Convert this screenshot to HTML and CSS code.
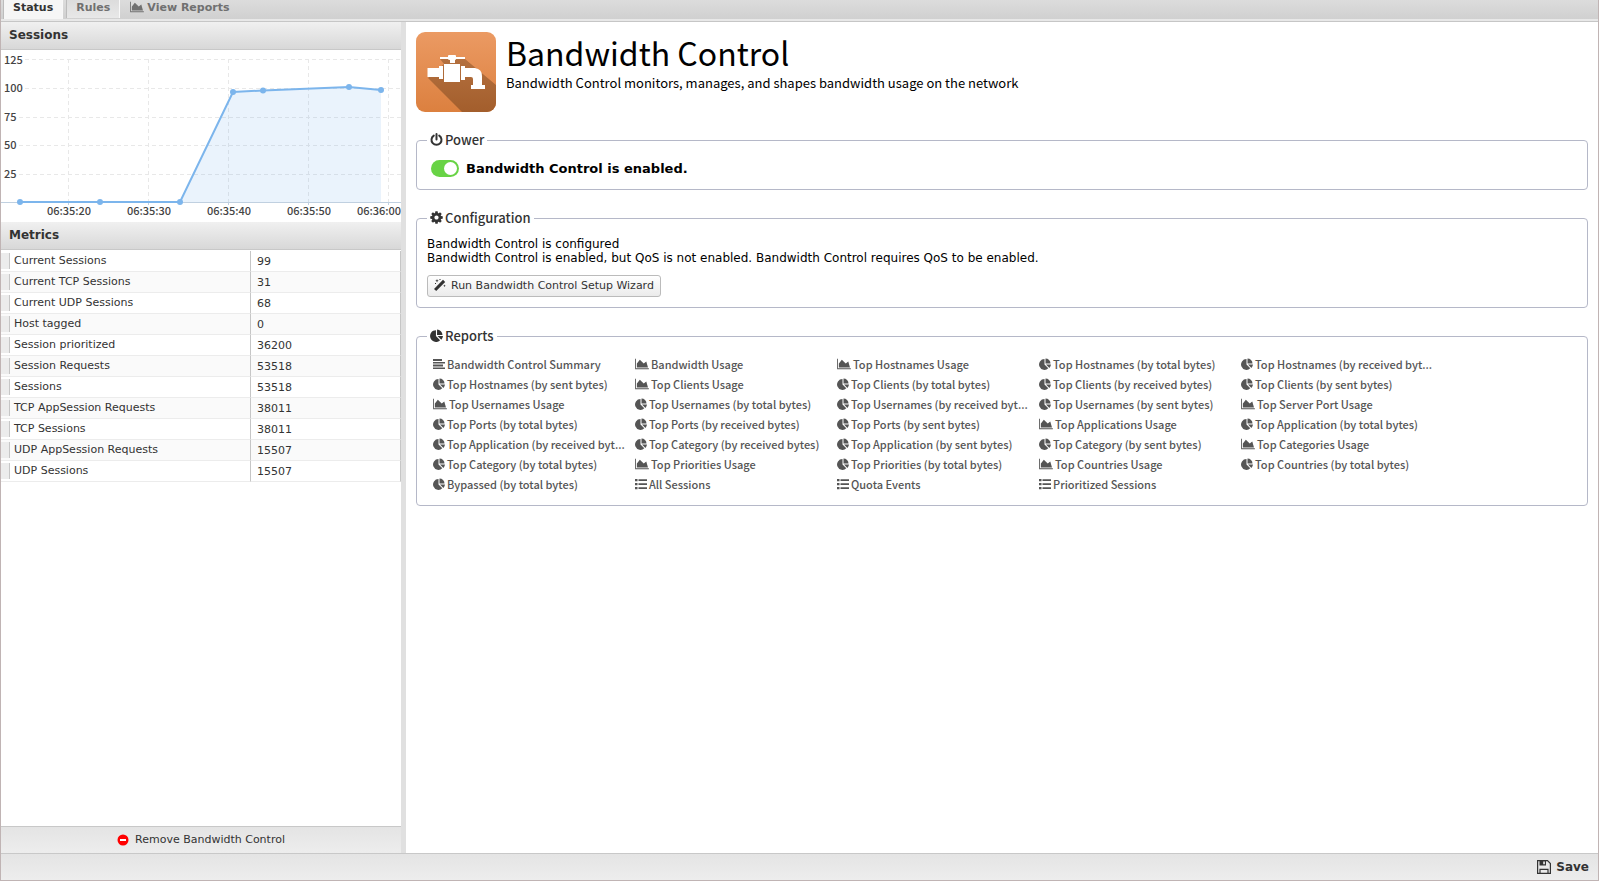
FILE: index.html
```html
<!DOCTYPE html>
<html lang="en">
<head>
  <meta charset="UTF-8">
  <meta name="viewport" content="width=device-width, initial-scale=1.0">
  <title>Bandwidth Control</title>
  <link rel="stylesheet" href="styles.css">
</head>
<body>
  <!-- icon set -->
  <svg class="sprite" aria-hidden="true">
    <symbol id="i-area" viewBox="0 0 2048 1792"><path d="M2048 1536v128H0V128h128v1408h1920zM1664 512l256 896H256V832l448-576 576 576z"/></symbol>
    <symbol id="i-pie" viewBox="0 0 12 12"><path d="M5.500 6.500 9.300 10.300A5.400 5.400 0 1 1 5.500 1.100zM7 6.500h5A5.500 5.500 0 0 1 10.400 9.900zM11.500 5.500h-5V.500A5 5 0 0 1 11.500 5.500z"/></symbol>
    <symbol id="i-align" viewBox="0 0 12 12"><path d="M0 1h9v2H0zM0 4h12v1.500H0zM0 6.500h10v2H0zM0 9.500h12v1.500H0z"/></symbol>
    <symbol id="i-list" viewBox="0 0 12 12"><path d="M0 1h2.500v2.300H0zM0 5h2.500v2.300H0zM0 9h2.500v2.300H0zM3.500 1.200H12v1.900H3.500zM3.500 5.200H12v1.900H3.500zM3.500 9.200H12v1.900H3.500z"/></symbol>
    <symbol id="i-power" viewBox="0 0 13 13"><path d="M3.800 2.600A5 5 0 1 0 9.200 2.600M6.500 1v5.500" fill="none" stroke="currentColor" stroke-width="2" stroke-linecap="round"/></symbol>
    <symbol id="i-gear" viewBox="100 100 1592 1592"><path d="M1152 896q0-106-75-181t-181-75-181 75-75 181 75 181 181 75 181-75 75-181zm512-109v222q0 12-8 23t-20 13l-185 28q-19 54-39 91 35 50 107 138 10 12 10 25t-9 23q-27 37-99 108t-94 71q-12 0-26-9l-138-108q-44 23-91 38-16 136-29 186-7 28-36 28H785q-14 0-24.500-8.500T749 1634l-28-184q-49-16-90-37l-141 107q-10 9-25 9-14 0-25-11-126-114-165-168-7-10-7-23 0-12 8-23 15-21 51-66.500t54-70.500q-27-50-41-99l-183-27q-13-2-21-12.500t-8-23.500V783q0-12 8-23t19-13l186-28q14-46 39-92-40-57-107-138-10-12-10-24 0-10 9-23 26-36 98.500-107.500T465 263q13 0 26 10l138 107q44-23 91-38 16-136 29-186 7-28 36-28h222q14 0 24.500 8.500T1043 158l28 184q49 16 90 37l142-107q9-9 24-9 13 0 25 10 129 119 165 170 7 8 7 22 0 12-8 23-15 21-51 66.500t-54 70.500q26 50 41 98l183 28q13 2 21 12.500t8 23.500z"/></symbol>
    <symbol id="i-wand" viewBox="0 0 12 12"><path d="M0 10 9 .800 11.200 3 2.200 12z"/><path d="M3 0l.5 1.200 1.200.5-1.200.5L3 3.400l-.5-1.200-1.200-.5 1.200-.5zM10.500 5.500l.4.900.9.400-.9.400-.4.900-.4-.9-.9-.4.900-.4zM5.500 0h1v1h-1zM1 4h1v1H1z"/></symbol>
    <symbol id="i-save" viewBox="0 0 14 14"><path d="M.6.600h9.900l2.900 2.900v9.900H.6z" fill="none" stroke="currentColor" stroke-width="1.200"/><path d="M2.500 1h6.500v4.500H2.500z"/><path d="M6.300 1.600h1.500v2.600H6.300z" fill="#fff"/><path d="M3 13V9.300h8V13" fill="none" stroke="currentColor" stroke-width="1.200"/></symbol>
  </svg>

  <div class="app">
    <nav class="tabs">
      <button class="tab active" type="button">Status</button>
      <button class="tab" type="button">Rules</button>
      <a class="reports-link" href="#"><svg class="icon wide"><use href="#i-area"/></svg>View Reports</a>
    </nav>

    <div class="main">
      <aside class="side">
        <h2 class="panel-head">Sessions</h2>
        <svg class="chart" viewBox="0 0 400 172" role="img" aria-label="Sessions">
          <g class="grid">
            <path d="M24 9.500H400M24 38.500H400M18 67.500H400M18 95.500H400M18 124.500H400"/>
            <path d="M67.500 9V152M147.500 9V152M227.500 9V152M307.500 9V152M387.500 9V152"/>
          </g>
          <path class="axis" d="M0 152.500H400M67.500 152v3M147.500 152v3M227.500 152v3M307.500 152v3M387.500 152v3"/>
          <path class="area" d="M179 152L232 42 262 40.500 348 37 380 40V152z"/>
          <path class="line" d="M19 152H179L232 42 262 40.500 348 37 380 40"/>
          <g class="dots">
            <circle cx="19" cy="152" r="3"/><circle cx="99" cy="152" r="3"/><circle cx="179" cy="152" r="3"/>
            <circle cx="232" cy="42" r="3"/><circle cx="262" cy="40.500" r="3"/><circle cx="348" cy="37" r="3"/><circle cx="380" cy="40" r="3"/>
          </g>
          <g class="labels">
            <text x="3" y="14">125</text><text x="3" y="42">100</text><text x="3" y="71">75</text><text x="3" y="99">50</text><text x="3" y="128">25</text>
          </g>
          <g class="labels times">
            <text x="68" y="165">06:35:20</text><text x="148" y="165">06:35:30</text><text x="228" y="165">06:35:40</text><text x="308" y="165">06:35:50</text><text x="378" y="165">06:36:00</text>
          </g>
        </svg>
        <h2 class="panel-head metrics-head">Metrics</h2>
        <table class="metrics">
          <tbody>
            <tr><td>Current Sessions</td><td>99</td></tr>
            <tr><td>Current TCP Sessions</td><td>31</td></tr>
            <tr><td>Current UDP Sessions</td><td>68</td></tr>
            <tr><td>Host tagged</td><td>0</td></tr>
            <tr><td>Session prioritized</td><td>36200</td></tr>
            <tr><td>Session Requests</td><td>53518</td></tr>
            <tr><td>Sessions</td><td>53518</td></tr>
            <tr><td>TCP AppSession Requests</td><td>38011</td></tr>
            <tr><td>TCP Sessions</td><td>38011</td></tr>
            <tr><td>UDP AppSession Requests</td><td>15507</td></tr>
            <tr><td>UDP Sessions</td><td>15507</td></tr>
          </tbody>
        </table>
        <button class="remove" type="button">
          <svg class="remove-icon" viewBox="0 0 12 12"><circle cx="6" cy="6" r="5.500" fill="#f00"/><path d="M3 5h6v2H3z" fill="#fff"/></svg>
          Remove Bandwidth Control
        </button>
      </aside>

      <main class="content">
        <header class="app-head">
          <svg class="app-icon" viewBox="0 0 80 80">
            <defs>
              <linearGradient id="orange" x1="0" y1="0" x2="0" y2="1"><stop offset="0" stop-color="#eb9a63"/><stop offset="1" stop-color="#dc803f"/></linearGradient>
              <linearGradient id="shade" x1="0" y1="0" x2="0" y2="1"><stop offset="0" stop-color="#b4703f"/><stop offset="1" stop-color="#a35e2c"/></linearGradient>
              <clipPath id="round"><rect width="80" height="80" rx="9"/></clipPath>
            </defs>
            <g clip-path="url(#round)">
              <rect width="80" height="80" fill="url(#orange)"/>
              <path d="M24 27H49L80 53V80H46L12 46 28 32z" fill="url(#shade)"/>
              <g fill="#fff">
                <path d="M24 25h8v-1q0-1 1-1h6q1 0 1 1v1h9v2h-9q0 1-1 1v3h-5v-3q-2 0-2-1h-8z"/>
                <rect x="28" y="32" width="16" height="18"/>
                <path d="M11.500 36H23v-2h4v13h-4v-2H11.500zM45 34h4v2h10q7 1 7 8v9h3v4H55v-4h2v-6q0-2-2-2h-6v3h-4z"/>
              </g>
            </g>
          </svg>
          <div>
            <h1>Bandwidth Control</h1>
            <p>Bandwidth Control monitors, manages, and shapes bandwidth usage on the network</p>
          </div>
        </header>

        <fieldset class="box power-box">
          <legend><svg class="icon"><use href="#i-power"/></svg>Power</legend>
          <label class="power"><input class="switch" type="checkbox" checked>Bandwidth Control is enabled.</label>
        </fieldset>

        <fieldset class="box config">
          <legend><svg class="icon"><use href="#i-gear"/></svg>Configuration</legend>
          <p>Bandwidth Control is configured<br>Bandwidth Control is enabled, but QoS is not enabled. Bandwidth Control requires QoS to be enabled.</p>
          <button class="wizard" type="button"><svg class="icon"><use href="#i-wand"/></svg>Run Bandwidth Control Setup Wizard</button>
        </fieldset>

        <fieldset class="box reports">
          <legend><svg class="icon"><use href="#i-pie"/></svg>Reports</legend>
          <div class="report-list" id="reports"></div>
        </fieldset>
      </main>
    </div>

    <footer class="bottom">
      <button class="save" type="button"><svg class="save-icon"><use href="#i-save"/></svg>Save</button>
    </footer>
  </div>
  <script src="script.js"></script>
</body>
</html>
```
FILE: script.js
```js
const reports = [
  ["align", "Bandwidth Control Summary"],
  ["area", "Bandwidth Usage"],
  ["area", "Top Hostnames Usage"],
  ["pie", "Top Hostnames (by total bytes)"],
  ["pie", "Top Hostnames (by received byt..."],
  ["pie", "Top Hostnames (by sent bytes)"],
  ["area", "Top Clients Usage"],
  ["pie", "Top Clients (by total bytes)"],
  ["pie", "Top Clients (by received bytes)"],
  ["pie", "Top Clients (by sent bytes)"],
  ["area", "Top Usernames Usage"],
  ["pie", "Top Usernames (by total bytes)"],
  ["pie", "Top Usernames (by received byt..."],
  ["pie", "Top Usernames (by sent bytes)"],
  ["area", "Top Server Port Usage"],
  ["pie", "Top Ports (by total bytes)"],
  ["pie", "Top Ports (by received bytes)"],
  ["pie", "Top Ports (by sent bytes)"],
  ["area", "Top Applications Usage"],
  ["pie", "Top Application (by total bytes)"],
  ["pie", "Top Application (by received byt..."],
  ["pie", "Top Category (by received bytes)"],
  ["pie", "Top Application (by sent bytes)"],
  ["pie", "Top Category (by sent bytes)"],
  ["area", "Top Categories Usage"],
  ["pie", "Top Category (by total bytes)"],
  ["area", "Top Priorities Usage"],
  ["pie", "Top Priorities (by total bytes)"],
  ["area", "Top Countries Usage"],
  ["pie", "Top Countries (by total bytes)"],
  ["pie", "Bypassed (by total bytes)"],
  ["list", "All Sessions"],
  ["list", "Quota Events"],
  ["list", "Prioritized Sessions"]
];

document.querySelector("#reports").innerHTML = reports.map(function (r) {
  let wide = r[0] == "area" ? " wide" : "";
  return `<a href="#"><svg class="icon${wide}"><use href="#i-${r[0]}"/></svg>${r[1]}</a>`;
}).join("");
```
FILE: styles.css
```css
* {
  box-sizing: border-box;
}

body {
  margin: 0;
  font-family: "DejaVu Sans", sans-serif;
  font-size: 11px;
  color: #333;
  background: #fff;
}

h1, h2, p {
  margin: 0;
}

button {
  font: inherit;
  color: inherit;
  cursor: pointer;
}

a {
  color: inherit;
  text-decoration: none;
}

.sprite {
  position: absolute;
  width: 0;
  height: 0;
}

.icon {
  width: 12px;
  height: 12px;
  fill: currentColor;
  flex: none;
}

.icon.wide {
  width: 14px;
}

.app {
  display: flex;
  flex-direction: column;
  height: 100vh;
  border: 1px solid #c0b4b4;
  border-top: 0;
}

/* tabs */
.tabs {
  display: flex;
  align-items: flex-start;
  height: 21px;
  padding-left: 2px;
  background: linear-gradient(#dcdcdc, #d0d0d0);
  border-bottom: 2px solid #e8e8e8;
  font-weight: bold;
  color: #707070;
}

.tab {
  height: 18px;
  margin-right: 3px;
  padding: 0 9px 4px;
  border: 1px solid #bcbcbc;
  border-right-color: #f8f8f8;
  border-width: 0 1px;
  background: linear-gradient(#dcdcdc, #e8e8e8);
  font-weight: bold;
}

.tab.active {
  height: 19px;
  padding-bottom: 5px;
  background: #f6f6f6;
  color: #333;
}

.reports-link {
  display: flex;
  align-items: center;
  gap: 3px;
  height: 14px;
  padding-left: 7px;
}

.main {
  display: flex;
  flex: 1;
  min-height: 0;
  border-top: 1px solid #c6c6c6;
}

/* left side */
.side {
  display: flex;
  flex-direction: column;
  flex: 0 0 405px;
  border-right: 5px solid #e0e0e0;
}

.panel-head {
  height: 28px;
  padding: 0 8px;
  border-bottom: 1px solid #c8c8c8;
  background: linear-gradient(#f0f0f0, #d8d8d8);
  font-size: 12px;
  line-height: 27px;
}

.chart {
  display: block;
  width: 100%;
}

.grid {
  fill: none;
  stroke: #e8e8e8;
  stroke-dasharray: 4 3;
}

.axis {
  fill: none;
  stroke: #c0d0e0;
}

.area {
  fill: #7cb5ec;
  fill-opacity: 0.16;
}

.line {
  fill: none;
  stroke: #7cb5ec;
  stroke-width: 2;
}

.dots {
  fill: #7cb5ec;
}

.labels {
  font-family: "Noto Sans CJK SC", sans-serif;
  font-size: 11px;
  font-weight: 500;
  fill: #444;
}

.times {
  text-anchor: middle;
}

.metrics {
  width: 100%;
  border-collapse: separate;
  border-spacing: 0;
  margin-top: 1px;
}

.metrics td {
  height: 21px;
  padding: 0 6px;
  border-right: 1px solid #c6c6c6;
  border-bottom: 1px solid #ececec;
}

.metrics td:first-child {
  width: 250px;
  padding-left: 0;
}

.metrics td:first-child::before {
  content: "";
  display: inline-block;
  width: 8px;
  height: 16px;
  margin-right: 4px;
  border-right: 1px solid #c6c6c6;
  background: #ececec;
  vertical-align: middle;
}

.metrics tr:nth-child(even) {
  background: #fafafa;
}

.remove {
  display: flex;
  align-items: center;
  justify-content: center;
  gap: 6px;
  height: 27px;
  margin-top: auto;
  padding-bottom: 2px;
  border: 0;
  border-top: 1px solid #c8c8c8;
  background: linear-gradient(#e4e4e4, #ededed);
}

.remove-icon {
  width: 12px;
  height: 12px;
}

/* content */
.content {
  flex: 1;
  min-width: 0;
  padding: 10px;
  font-family: "Noto Sans CJK SC", sans-serif;
}

.app-head {
  display: flex;
  gap: 10px;
  height: 80px;
  color: #000;
}

.app-icon {
  width: 80px;
  height: 80px;
}

.app-head h1 {
  font-size: 32px;
  font-weight: normal;
  line-height: 40px;
}

.app-head p {
  font-size: 13px;
  line-height: 22px;
}

.box {
  margin: 18px 0 0;
  padding: 0 10px 10px;
  border: 1px solid #b5b8c8;
  border-radius: 4px;
  min-width: 0;
}

.box legend {
  display: flex;
  align-items: center;
  gap: 2px;
  height: 20px;
  padding: 0 3px 1px;
  font-size: 13px;
  font-weight: 500;
  color: #333;
}

.box legend .icon {
  width: 13px;
  height: 13px;
}

.power-box {
  padding-bottom: 7px;
}

.power {
  display: flex;
  align-items: center;
  gap: 7px;
  height: 28px;
  margin-top: 4px;
  padding-left: 4px;
  font: bold 13px "DejaVu Sans", sans-serif;
  color: #000;
}

.switch {
  appearance: none;
  width: 28px;
  height: 17px;
  margin: 0;
  padding: 2px;
  border-radius: 9px;
  background: #68d345;
}

.switch::before {
  content: "";
  display: block;
  width: 13px;
  height: 13px;
  border-radius: 50%;
  background: #fff;
}

.switch:checked::before {
  margin-left: auto;
}

.config p {
  padding-top: 9px;
  font: 12px/14px "DejaVu Sans", sans-serif;
  color: #000;
}

.wizard {
  display: flex;
  align-items: center;
  gap: 5px;
  height: 22px;
  margin-top: 10px;
  padding: 0 6px 2px;
  border: 1px solid #bbb;
  border-radius: 3px;
  background: linear-gradient(#fff, #ebebeb);
  font: 11px "DejaVu Sans", sans-serif;
}

.reports {
  padding-bottom: 11px;
}

.report-list {
  display: grid;
  grid-template-columns: repeat(auto-fill, 202px);
  padding: 8px 0 0 6px;
  max-width: 1020px;
  font-size: 11px;
  font-weight: 500;
  line-height: 20px;
  color: #555;
}

.report-list a {
  white-space: nowrap;
}

.report-list .icon {
  margin-right: 2px;
  vertical-align: -1px;
}

/* bottom bar */
.bottom {
  display: flex;
  justify-content: flex-end;
  height: 27px;
  border-top: 1px solid #c8c8c8;
  background: linear-gradient(#e4e4e4, #ededed);
}

.save {
  display: flex;
  align-items: center;
  gap: 5px;
  padding: 0 9px;
  border: 0;
  background: none;
  font-size: 12px;
  font-weight: bold;
}

.save-icon {
  width: 14px;
  height: 14px;
  fill: currentColor;
}
```
